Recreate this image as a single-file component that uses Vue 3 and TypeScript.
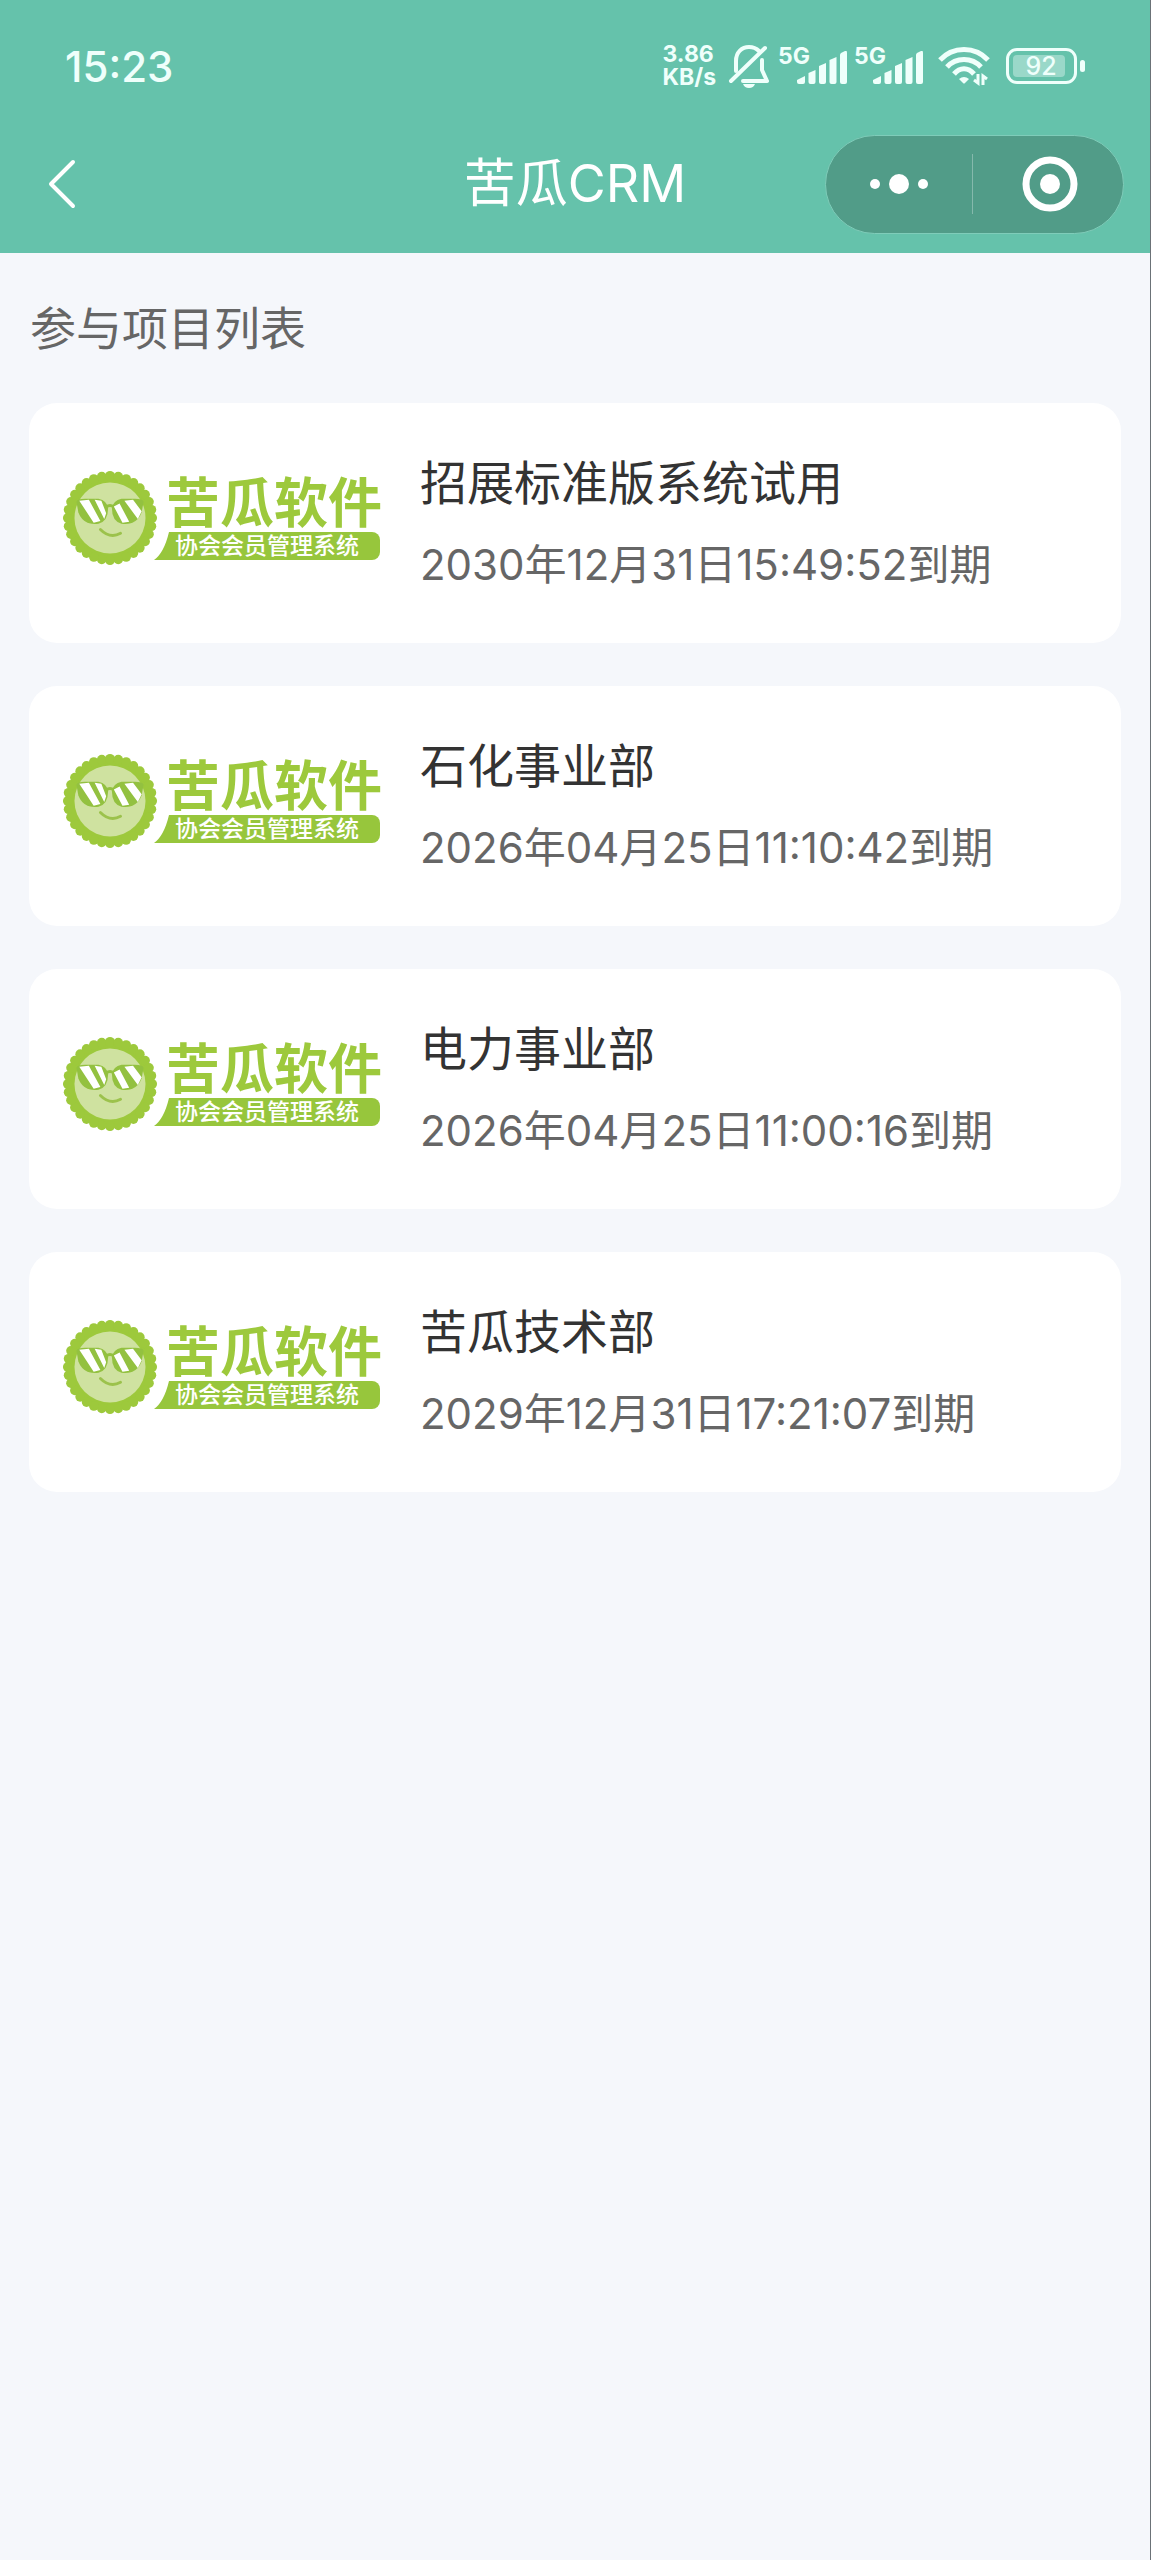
<script setup lang="ts">
interface Project {
  id: number
  name: string
  expires: string
}

const projects: Project[] = [
  { id: 1, name: '招展标准版系统试用', expires: '2030年12月31日15:49:52到期' },
  { id: 2, name: '石化事业部', expires: '2026年04月25日11:10:42到期' },
  { id: 3, name: '电力事业部', expires: '2026年04月25日11:00:16到期' },
  { id: 4, name: '苦瓜技术部', expires: '2029年12月31日17:21:07到期' },
]

// Scalloped rim of the badge: small bumps spaced evenly on a circle
const BUMPS = 32
const bumps = Array.from({ length: BUMPS }, (_, i) => {
  const a = (i / BUMPS) * Math.PI * 2
  return { x: 50 + 44 * Math.cos(a), y: 50 + 44 * Math.sin(a) }
})
</script>

<template>
  <div class="screen">
    <header class="top">
      <div class="status">
        <span class="clock">15:23</span>
        <div class="indicators">
          <div class="speed"><span>3.86</span><span>KB/s</span></div>
          <svg class="bell" width="42" height="44" viewBox="0 0 42 44" fill="none" stroke="currentColor" stroke-width="4" stroke-linecap="round" stroke-linejoin="round">
            <path d="M8 27V17C8 8 14 3 21 3c5 0 8 2 10 4" />
            <path d="M34 16v10l5 11H15" />
            <path d="M3 37L37 4" />
            <path d="M15 40h12c-1 2.500-3 4-6 4s-5-1.500-6-4z" fill="currentColor" stroke="none" />
          </svg>
          <div v-for="n in 2" :key="n" class="signal">
            <span class="net">5G</span>
            <svg width="51" height="34" viewBox="0 0 51 34" fill="currentColor">
              <path d="M0 29l8-4v6q0 2-2 2H2q-2 0-2-2z" />
              <path d="M11.500 22l7-3v12q0 2-2 2h-3q-2 0-2-2z" />
              <path d="M22 15l7-3v19q0 2-2 2h-3q-2 0-2-2z" />
              <path d="M32.500 9l7-3v25q0 2-2 2h-3q-2 0-2-2z" />
              <path d="M43 4q0-1 1-2l4-2q2-1 2 2v29q0 2-2 2h-3q-2 0-2-2z" />
            </svg>
          </div>
          <svg class="wifi" width="52" height="40" viewBox="0 0 52 40" fill="none" stroke="currentColor" stroke-width="5">
            <path d="M2 14C15 0 37 0 50 14" />
            <path d="M9 21C18 11 34 11 43 21" />
            <path d="M16 28C22 21 30 21 36 28" />
            <path d="M21 33q5-4 10 0l-4 4q-1 1-2 0z" fill="currentColor" stroke="none" />
            <path d="M40 28v9l-4-3M45 39v-9l4 3" stroke-width="3" />
          </svg>
          <div class="battery">
            <div class="cell"><div class="level">92</div></div>
            <div class="tip"></div>
          </div>
        </div>
      </div>
      <nav class="bar">
        <button class="back" type="button" aria-label="返回">
          <svg width="28" height="50" viewBox="0 0 28 50" fill="none" stroke="currentColor" stroke-width="4" stroke-linecap="round" stroke-linejoin="round">
            <path d="M25 3L3 25L25 47" />
          </svg>
        </button>
        <h1>苦瓜CRM</h1>
        <div class="capsule">
          <button type="button" aria-label="更多">
            <svg width="60" height="20" viewBox="0 0 60 20" fill="currentColor">
              <circle cx="6" cy="10" r="5" /><circle cx="30" cy="10" r="10" /><circle cx="54" cy="10" r="5" />
            </svg>
          </button>
          <i class="divider"></i>
          <button type="button" aria-label="关闭">
            <svg width="56" height="56" viewBox="0 0 56 56">
              <circle cx="28" cy="28" r="24" fill="none" stroke="currentColor" stroke-width="7" />
              <circle cx="28" cy="28" r="10" fill="currentColor" />
            </svg>
          </button>
        </div>
      </nav>
    </header>

    <main>
      <h2>参与项目列表</h2>
      <ul class="list">
        <li v-for="p in projects" :key="p.id">
          <a href="#" class="card">
            <div class="logo">
              <svg width="96" height="96" viewBox="0 0 100 100">
                <circle cx="50" cy="50" r="46" fill="#9dc93c" />
                <circle v-for="(b, i) in bumps" :key="i" :cx="b.x" :cy="b.y" r="5" fill="#9dc93c" />
                <circle cx="50" cy="50" r="37" fill="#cfe2a0" />
                <g fill="#93c140">
                  <path d="M15 33Q16 30 24 30L38 30Q47 32 48 40Q48 53 38 56Q22 58 17 44z" />
                  <path d="M85 33Q84 30 76 30L62 30Q53 32 52 40Q52 53 62 56Q78 58 83 44z" />
                  <path d="M46 39Q50 35 54 39" fill="none" stroke="#93c140" stroke-width="3" />
                </g>
                <path d="M18 32l10-1 12 22-7 2zM34 31l7 1 5 13-2 6zM54 38l6-3 10 19-7 1zM65 32l9-1 9 12-4 8z" fill="#fff" />
                <path d="M40 62q10 10 21 4" fill="none" stroke="#9cc24c" stroke-width="3" stroke-linecap="round" />
              </svg>
              <div class="wordmark">
                <b>苦瓜软件</b>
                <div class="tagline">
                  <svg width="16" height="28" viewBox="0 0 16 28"><path d="M16 0v28H0Q10 21 15 0z" fill="#97c63c" /></svg>
                  <span>协会会员管理系统</span>
                </div>
              </div>
            </div>
            <div class="info">
              <strong>{{ p.name }}</strong>
              <span>{{ p.expires }}</span>
            </div>
          </a>
        </li>
      </ul>
    </main>
  </div>
</template>

<style>
body {
  margin: 0;
  background: #f5f7fb;
}
</style>

<style scoped>
.screen {
  box-sizing: border-box;
  min-height: 100vh;
  border-right: 1px solid #6b7277;
  background: #f5f7fb;
  color: #333;
  font-family: Inter, "Noto Sans CJK SC", sans-serif;
}
button {
  padding: 0;
  border: 0;
  background: none;
  color: inherit;
}
svg {
  display: block;
  flex: none;
}
.top {
  background: #65c2ab;
  color: #fff;
}
.status {
  display: flex;
  align-items: center;
  justify-content: space-between;
  height: 132px;
  padding: 0 65px;
  box-sizing: border-box;
  color: #effffb;
}
.clock {
  font-size: 42px;
  font-weight: 500;
}
.indicators {
  display: flex;
  align-items: center;
}
.speed {
  display: flex;
  flex-direction: column;
  font-size: 23px;
  line-height: 23px;
  font-weight: 700;
}
.bell {
  margin: 0 8px 0 12px;
}
.signal {
  display: flex;
  align-items: flex-start;
  height: 38px;
  margin-right: 6px;
}
.signal svg {
  align-self: flex-end;
  margin-left: -13px;
}
.net {
  font-size: 23px;
  line-height: 18px;
  font-weight: 700;
}
.wifi {
  margin: 0 16px 0 8px;
}
.battery {
  display: flex;
  align-items: center;
  gap: 3px;
}
.cell {
  box-sizing: border-box;
  width: 71px;
  height: 36px;
  padding: 4px;
  border: 3px solid;
  border-radius: 11px;
}
.level {
  box-sizing: border-box;
  width: 52px;
  height: 22px;
  border-radius: 4px;
  padding-left: 4px;
  background: #9ad8c9;
  font-size: 25px;
  line-height: 22px;
  font-weight: 500;
  text-align: center;
}
.tip {
  width: 5px;
  height: 12px;
  border-radius: 3px;
  background: currentColor;
}
.bar {
  display: grid;
  grid-template-columns: 1fr auto 1fr;
  align-items: center;
  height: 121px;
  padding: 0 26px 17px;
  box-sizing: border-box;
}
.back {
  justify-self: start;
  padding-left: 22px;
}
h1 {
  margin: 0;
  font-size: 52px;
  line-height: 72px;
  font-weight: 400;
}
.capsule {
  box-sizing: border-box;
  display: flex;
  align-items: center;
  justify-self: end;
  width: 299px;
  height: 99px;
  border: 1px solid #7fccb9;
  border-radius: 50px;
  background: #519c88;
}
.capsule button {
  display: flex;
  flex: 1;
  align-items: center;
  justify-content: center;
  height: 100%;
}
.capsule button:last-child {
  box-sizing: border-box;
  padding-left: 5px;
}
.divider {
  width: 1px;
  height: 60px;
  background: #85b9ac;
}
main {
  padding: 40px 29px;
}
h2 {
  margin: 0;
  padding-left: 1px;
  font-size: 46px;
  line-height: 70px;
  font-weight: 400;
  color: #666;
}
.list {
  display: flex;
  flex-direction: column;
  gap: 43px;
  margin: 40px 0 0;
  padding: 0;
  list-style: none;
}
.card {
  display: flex;
  align-items: center;
  gap: 38px;
  min-height: 240px;
  padding: 0 33px;
  box-sizing: border-box;
  border-radius: 28px;
  background: #fff;
  color: #333;
  text-decoration: none;
}
.logo {
  display: flex;
  align-items: center;
  flex: none;
  width: 320px;
  padding-bottom: 10px;
}
.wordmark {
  display: flex;
  flex-direction: column;
  margin-left: -4px;
}
.wordmark b {
  padding-left: 12px;
  font-size: 54px;
  line-height: 56px;
  font-weight: 700;
  color: #9dc93c;
}
.tagline {
  display: flex;
  height: 28px;
}
.tagline span {
  padding: 0 21px 0 5px;
  border-radius: 0 8px 8px 0;
  background: #97c63c;
  color: #fff;
  font-size: 23px;
  line-height: 28px;
  font-weight: 500;
  white-space: nowrap;
}
.info {
  display: flex;
  flex-direction: column;
  min-width: 0;
  padding-top: 2px;
}
.info strong {
  font-size: 47px;
  line-height: 82px;
  font-weight: 400;
}
.info span {
  font-size: 42px;
  line-height: 82px;
  color: #666;
}
</style>
